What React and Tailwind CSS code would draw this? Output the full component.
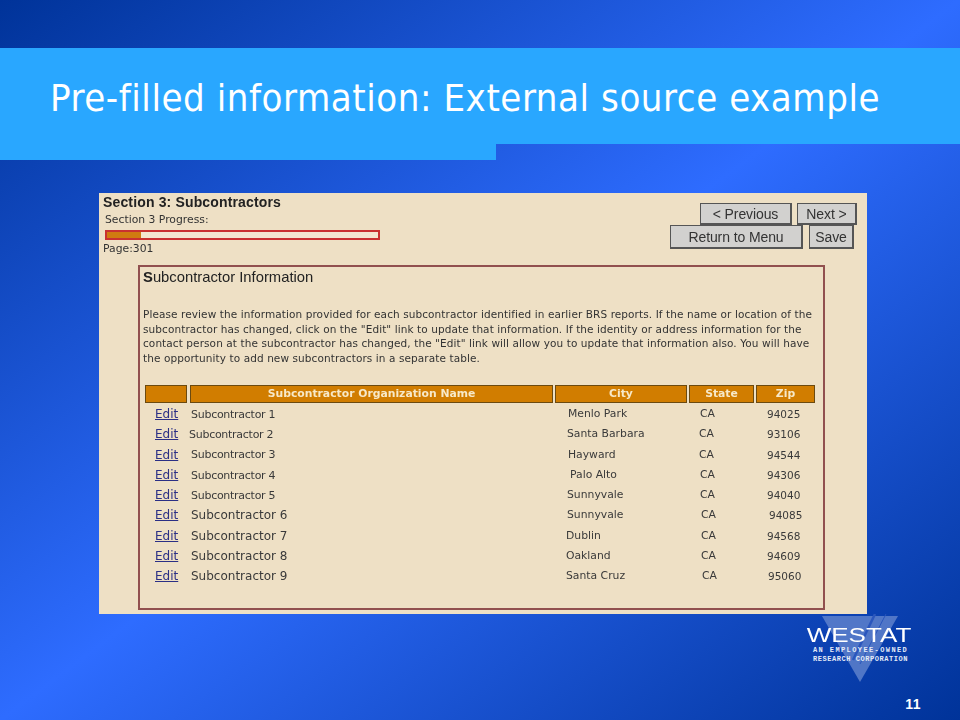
import React from 'react';

const rows = [
  { name: 'Subcontractor 1', city: 'Menlo Park', state: 'CA', zip: '94025', nameCls: 'ml-px text-[11px] tracking-[-0.27px]', cityCls: 'ml-px', stateCls: '', zipCls: '', h: 'h-5' },
  { name: 'Subcontractor 2', city: 'Santa Barbara', state: 'CA', zip: '93106', nameCls: '-ml-px text-[11px] tracking-[-0.27px]', cityCls: '', stateCls: '-ml-px', zipCls: '', h: 'h-5' },
  { name: 'Subcontractor 3', city: 'Hayward', state: 'CA', zip: '94544', nameCls: 'ml-px text-[11px] tracking-[-0.27px]', cityCls: 'ml-px', stateCls: '-ml-px', zipCls: '', h: 'h-[21px]' },
  { name: 'Subcontractor 4', city: 'Palo Alto', state: 'CA', zip: '94306', nameCls: 'ml-px text-[11px] tracking-[-0.27px]', cityCls: 'ml-[3px]', stateCls: '', zipCls: '', h: 'h-5' },
  { name: 'Subcontractor 5', city: 'Sunnyvale', state: 'CA', zip: '94040', nameCls: 'ml-px text-[11px] tracking-[-0.27px]', cityCls: '', stateCls: '', zipCls: '', h: 'h-5' },
  { name: 'Subcontractor 6', city: 'Sunnyvale', state: 'CA', zip: '94085', nameCls: 'ml-px text-[12px]', cityCls: '', stateCls: 'ml-px', zipCls: 'ml-0.5', h: 'h-5' },
  { name: 'Subcontractor 7', city: 'Dublin', state: 'CA', zip: '94568', nameCls: 'ml-px text-[12px]', cityCls: '-ml-px', stateCls: 'ml-px', zipCls: '', h: 'h-[21px]' },
  { name: 'Subcontractor 8', city: 'Oakland', state: 'CA', zip: '94609', nameCls: 'ml-px text-[12px]', cityCls: '-ml-px', stateCls: 'ml-px', zipCls: '', h: 'h-5' },
  { name: 'Subcontractor 9', city: 'Santa Cruz', state: 'CA', zip: '95060', nameCls: 'ml-px text-[12px]', cityCls: '-ml-px', stateCls: 'ml-0.5', zipCls: 'ml-px', h: 'h-5' },
];

function WinButton({ children, className }) {
  return (
    <button
      type="button"
      className={`bg-[#d2d1cf] border border-[#555] border-r-2 border-b-2 text-[#333] text-[14px] leading-none tracking-[-0.1px] font-['Liberation_Sans',sans-serif] ${className}`}
    >
      {children}
    </button>
  );
}

function WestatLogo() {
  return (
    <div className="relative w-[106px] h-[68px]">
      <svg className="absolute left-0 top-0" width="106" height="70" viewBox="0 0 106 70">
        <polygon points="16,2 92,2 54,68" fill="#6f8ed2" fillOpacity="0.7" />
        <path d="M69 0 L47 46" stroke="#2a56bd" strokeWidth="2.5" fill="none" />
        <path d="M80 0 L54 50" stroke="#2a56bd" strokeWidth="1" fill="none" />
      </svg>
      <div className="absolute left-0 top-[11px] w-[106px] text-center text-white text-[21px] leading-[20px] scale-x-[1.24] font-['Liberation_Sans',sans-serif]">
        WESTAT
      </div>
      <div className="absolute left-[7px] top-[32px] text-[#e4eaf7] font-bold text-[7px] leading-[9px] font-['Liberation_Mono',monospace] whitespace-nowrap">
        <div className="tracking-[1.4px]">AN EMPLOYEE-OWNED</div>
        <div className="tracking-[0.55px]">RESEARCH CORPORATION</div>
      </div>
    </div>
  );
}

export default function App() {
  return (
    <div className="w-[960px] h-[720px] overflow-hidden bg-[linear-gradient(to_bottom_right,#003399_0%,#2e6cff_50%,#003399_100%)] pt-12">
      {/* title band */}
      <div className="h-24 bg-[#29a7ff] pl-[50px] flex items-center">
        <h1 className="text-white text-[38px] leading-none whitespace-nowrap mt-[3px] tracking-[0.55px] font-stretch-condensed font-['DejaVu_Sans',sans-serif]">
          Pre-filled information: External source example
        </h1>
      </div>
      <div className="h-4 w-[496px] bg-[#29a7ff]" />

      {/* screenshot */}
      <div className="ml-[99px] mt-[33px] w-[768px] h-[421px] bg-[#eee0c5] font-['DejaVu_Sans',sans-serif] text-[#333] blur-[0.3px]">
        <div className="flex justify-between h-[72px]">
          <div className="pl-1 pt-[2px]">
            <div className="text-[14px] leading-[14px] font-bold text-[#222] tracking-[0.15px] font-['Liberation_Sans',sans-serif]">Section 3: Subcontractors</div>
            <div className="ml-0.5 mt-1 text-[10.8px] leading-[14px]">Section 3 Progress:</div>
            <div className="ml-0.5 mt-[3px] w-[275px] h-[10px] border-2 border-[#c93030] bg-[#f3e6d0]">
              <div className="w-[34px] h-full bg-[#d07a10]" />
            </div>
            <div className="mt-[2px] text-[10.8px] leading-[14px]">Page:301</div>
          </div>
          <div className="pt-[10px] pr-[10px] flex flex-col items-end">
            <div className="flex gap-[5px]">
              <WinButton className="w-[92px] h-[22px]">&lt; Previous</WinButton>
              <WinButton className="w-[60px] h-[22px]">Next &gt;</WinButton>
            </div>
            <div className="flex gap-[6px] pr-[3px]">
              <WinButton className="w-[133px] h-[24px]">Return to Menu</WinButton>
              <WinButton className="w-[45px] h-[24px]">Save</WinButton>
            </div>
          </div>
        </div>

        {/* inner panel */}
        <div className="ml-[39px] w-[687px] h-[345px] border-2 border-[#91504f] pl-[3px]">
          <div className="mt-[2px] text-[14.8px] leading-[16px] font-['Liberation_Sans',sans-serif] text-[#222]"><b>S</b>ubcontractor Information</div>
          <div className="mt-[22px] text-[10.5px] leading-[14.6px] whitespace-nowrap tracking-[0.09px]">
            <div>Please review the information provided for each subcontractor identified in earlier BRS reports. If the name or location of the</div>
            <div>subcontractor has changed, click on the "Edit" link to update that information. If the identity or address information for the</div>
            <div>contact person at the subcontractor has changed, the "Edit" link will allow you to update that information also. You will have</div>
            <div>the opportunity to add new subcontractors in a separate table.</div>
          </div>

          <div className="ml-0.5 mt-[20px] flex gap-[2px] w-[670px] text-[#f7e9c8] text-[10.8px] font-bold">
            <div className="w-[42px] mr-px h-[18px] bg-[#d17d00] border border-[#6b4a10]" />
            <div className="w-[363px] h-[18px] bg-[#d17d00] border border-[#6b4a10] text-center leading-[16px]">Subcontractor Organization Name</div>
            <div className="w-[132px] h-[18px] bg-[#d17d00] border border-[#6b4a10] text-center leading-[16px]">City</div>
            <div className="w-[65px] h-[18px] bg-[#d17d00] border border-[#6b4a10] text-center leading-[16px]">State</div>
            <div className="w-[59px] h-[18px] bg-[#d17d00] border border-[#6b4a10] text-center leading-[16px]">Zip</div>
          </div>

          <div className="ml-px mt-px">
            {rows.map((r) => (
              <div key={r.name} className={`grid grid-cols-[46px_377px_133px_67px_auto] items-center leading-none text-[#3a3a3a] ${r.h}`}>
                <a className="ml-[11px] text-[#2b2f85] underline text-[12px]">Edit</a>
                <div className="whitespace-nowrap">
                  <span className={`block ${r.nameCls}`}>{r.name}</span>
                </div>
                <div className="text-[10.8px] pt-px whitespace-nowrap"><span className={`block ${r.cityCls}`}>{r.city}</span></div>
                <div className="text-[10.8px] pt-px"><span className={`block ${r.stateCls}`}>{r.state}</span></div>
                <div className="text-[10.5px]"><span className={`block ${r.zipCls}`}>{r.zip}</span></div>
              </div>
            ))}
          </div>
        </div>
      </div>

      {/* footer */}
      <div className="flex justify-end pr-[48px]">
        <WestatLogo />
      </div>
      <div className="mt-[15px] pr-[39px] text-right text-white text-[14px] leading-[14px] tracking-[0.5px] font-bold font-['Liberation_Sans',sans-serif]">11</div>
    </div>
  );
}
